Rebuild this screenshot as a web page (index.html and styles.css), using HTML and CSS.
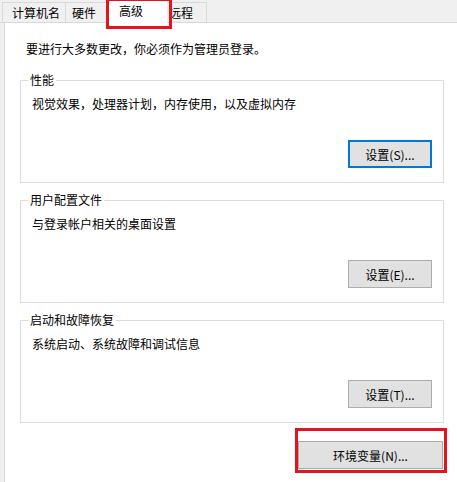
FILE: index.html
```html
<!DOCTYPE html>
<html lang="zh-CN">
<head>
<meta charset="utf-8">
<title>系统属性 - 高级</title>
<link rel="stylesheet" href="styles.css">
</head>
<body>
<div class="tabs">
  <div class="tab t1">计算机名</div>
  <div class="tab t2">硬件</div>
  <div class="tab active">高级</div>
  <div class="tab t4">远程</div>
</div>
<div class="panel">
  <div class="intro">要进行大多数更改，你必须作为管理员登录。</div>

  <fieldset class="group">
    <legend>性能</legend>
    <div class="desc">视觉效果，处理器计划，内存使用，以及虚拟内存</div>
    <div class="btnrow"><button class="btn default">设置(S)...</button></div>
  </fieldset>

  <fieldset class="group">
    <legend>用户配置文件</legend>
    <div class="desc">与登录帐户相关的桌面设置</div>
    <div class="btnrow"><button class="btn">设置(E)...</button></div>
  </fieldset>

  <fieldset class="group">
    <legend>启动和故障恢复</legend>
    <div class="desc">系统启动、系统故障和调试信息</div>
    <div class="btnrow"><button class="btn">设置(T)...</button></div>
  </fieldset>

  <div class="envrow">
    <div class="highlight"><button class="btn wide">环境变量(N)...</button></div>
  </div>
</div>
</body>
</html>
```

FILE: styles.css
```css
html, body {
  margin: 0;
  padding: 0;
}
body {
  width: 457px;
  height: 482px;
  overflow: hidden;
  background: #f0f0f0;
  font-family: "Noto Sans CJK SC", "Noto Sans", sans-serif;
  font-size: 12px;
  color: #000;
}

.tabs {
  display: flex;
  height: 22px;
  border-bottom: 1px solid #d9d9d9;
  padding-left: 2px;
  position: relative;
  z-index: 1;
}
.tab {
  box-sizing: border-box;
  margin-top: 2px;
  height: 20px;
  line-height: 19px;
  border-top: 1px solid #d9d9d9;
  border-right: 1px solid #d9d9d9;
  white-space: nowrap;
}
.tab.t1 {
  border-left: 1px solid #d9d9d9;
  padding: 0 5px 0 9px;
}
.tab.t2 {
  padding: 0 10px 0 6px;
}
.tab.active {
  margin-top: 0;
  height: 23px;
  line-height: 20px;
  background: #fff;
  border-top: 1px solid #d9d9d9;
  border-right: 0;
  padding: 0 24px 0 12px;
  position: relative;
  z-index: 2;
}
.tab.active::after {
  content: "";
  position: absolute;
  left: -1px;
  top: -3px;
  width: 66px;
  height: 31px;
  box-sizing: border-box;
  border: 3px solid #e3141b;
}
.tab.t4 {
  padding: 0 13px 0 2px;
}

.panel {
  margin-left: 4px;
  border-left: 1px solid #d9d9d9;
  background: #fff;
  height: 459px;
  box-sizing: border-box;
  padding: 18px 13px 0 15px;
}
.intro {
  margin-left: 6px;
  line-height: 16px;
}

.group {
  margin: 9px 0 0;
  padding: 0 11px 14px 11px;
  border: 1px solid #dcdcdc;
  min-width: 0;
}
.group:first-of-type {
  margin-top: 15px;
}
.group legend {
  padding: 0 2px;
  margin-left: -4px;
  line-height: 16px;
}
.desc {
  margin-top: 8px;
  line-height: 16px;
}
.btnrow {
  display: flex;
  justify-content: flex-end;
  margin-top: 28px;
}

.btn {
  box-sizing: border-box;
  width: 84px;
  height: 28px;
  padding: 0;
  border: 1px solid #adadad;
  background: #e1e1e1;
  font-family: inherit;
  font-size: 12px;
  color: #000;
}
.btn.default {
  border: 2px solid #0078d7;
}
.btn.wide {
  width: 145px;
}

.envrow {
  display: flex;
  justify-content: flex-end;
  margin: 5px -3px 0 0;
}
.highlight {
  border: 3px solid #e3141b;
  padding: 10px 1px 1px 0;
}
```
